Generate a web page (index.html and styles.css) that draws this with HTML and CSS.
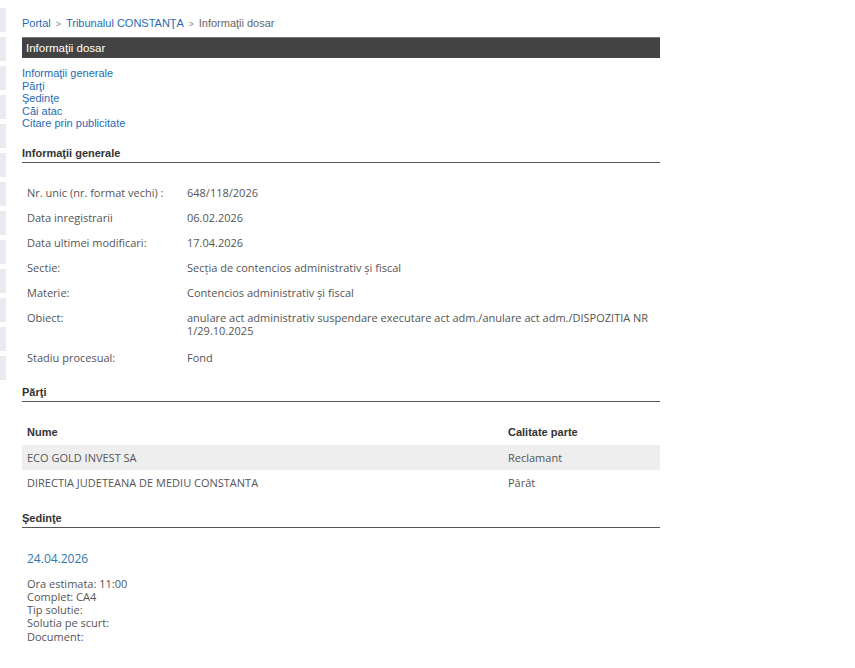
FILE: index.html
```html
<!DOCTYPE html>
<html lang="ro">
<head>
    <meta charset="UTF-8">
    <meta name="viewport" content="width=device-width, initial-scale=1.0">
    <title>Informaţii dosar</title>
    <link rel="stylesheet" href="styles.css">
</head>
<body>

    <div class="side-strip">
        <div></div><div></div><div></div><div></div><div></div><div></div>
        <div></div><div></div><div></div><div></div><div></div><div></div>
        <div></div>
    </div>

    <div class="page">
        <div class="breadcrumb">
            <a href="#">Portal</a>
            <span class="sep">&gt;</span>
            <a href="#">Tribunalul CONSTANŢA</a>
            <span class="sep">&gt;</span>
            <span class="current">Informaţii dosar</span>
        </div>

        <div class="title-bar">Informaţii dosar</div>

        <div class="anchors">
            <a href="#generale">Informaţii generale</a>
            <a href="#parti">Părţi</a>
            <a href="#sedinte">Şedinţe</a>
            <a href="#cai">Căi atac</a>
            <a href="#citare">Citare prin publicitate</a>
        </div>

        <h3 class="section-title" id="generale">Informaţii generale</h3>
        <table class="info-table">
            <tr><td class="label">Nr. unic (nr. format vechi) :</td><td>648/118/2026</td></tr>
            <tr><td class="label">Data inregistrarii</td><td>06.02.2026</td></tr>
            <tr><td class="label">Data ultimei modificari:</td><td>17.04.2026</td></tr>
            <tr><td class="label">Sectie:</td><td>Secţia de contencios administrativ şi fiscal</td></tr>
            <tr><td class="label">Materie:</td><td>Contencios administrativ şi fiscal</td></tr>
            <tr class="tall"><td class="label">Obiect:</td><td>anulare act administrativ suspendare executare act adm./anulare act adm./DISPOZITIA NR 1/29.10.2025</td></tr>
            <tr><td class="label">Stadiu procesual:</td><td>Fond</td></tr>
        </table>

        <h3 class="section-title" id="parti">Părţi</h3>
        <table class="parti-table">
            <tr class="head"><td>Nume</td><td class="calitate">Calitate parte</td></tr>
            <tr class="odd"><td>ECO GOLD INVEST SA</td><td class="calitate">Reclamant</td></tr>
            <tr><td>DIRECTIA JUDETEANA DE MEDIU CONSTANTA</td><td class="calitate">Pârât</td></tr>
        </table>

        <h3 class="section-title" id="sedinte">Şedinţe</h3>
        <div class="sedinta">
            <div class="sedinta-date">24.04.2026</div>
            <div class="sedinta-info">
                Ora estimata: 11:00<br>
                Complet: CA4<br>
                Tip solutie: <br>
                Solutia pe scurt: <br>
                Document:
            </div>
        </div>
    </div>

</body>
</html>
```

FILE: styles.css
```css
body {
    margin: 0;
    background: #fff;
    font-family: 'Liberation Sans', Arial, sans-serif;
    font-size: 11px;
    color: #555;
}

a {
    color: #1f6bb5;
    text-decoration: none;
}

.side-strip {
    position: absolute;
    left: 0;
    top: 8px;
    width: 6px;
    display: flex;
    flex-direction: column;
    gap: 5px;
}

.side-strip div {
    height: 24px;
    background: #e8ecf1;
}

.page {
    width: 638px;
    margin-left: 22px;
    padding-top: 15px;
}

.breadcrumb {
    height: 16px;
    line-height: 16px;
}

.breadcrumb .sep {
    color: #888;
    font-size: 9px;
    margin: 0 2px;
}

.breadcrumb .current {
    color: #666;
}

.title-bar {
    margin-top: 6px;
    background: #434343;
    border-top: 1px solid #777;
    color: #fff;
    font-size: 11.5px;
    height: 20px;
    line-height: 20px;
    padding-left: 4px;
}

.anchors {
    margin-top: 9px;
    padding-bottom: 3px;
    display: flex;
    flex-direction: column;
    line-height: 12.5px;
}

.section-title {
    margin: 13px 0 0 0;
    font-size: 11px;
    font-weight: bold;
    color: #333;
    border-bottom: 1px solid #555;
    padding-bottom: 2px;
    line-height: 14px;
}

.info-table, .parti-table {
    width: 100%;
    border-collapse: collapse;
    font-family: 'Open Sans', Tahoma, sans-serif;
    font-size: 11px;
    color: #555;
}

.info-table {
    margin-top: 19px;
}

.info-table td {
    vertical-align: top;
    padding: 4px 5px;
    line-height: 13px;
    height: 17px;
}

.info-table tr.tall td {
    padding-bottom: 10px;
}

.info-table td.label {
    width: 150px;
}

.parti-table {
    margin-top: 18px;
    margin-bottom: 16px;
    table-layout: fixed;
}

.parti-table td {
    padding: 0 5px;
    height: 25px;
}

.parti-table tr.head td {
    font-family: 'Liberation Sans', Arial, sans-serif;
    font-size: 11px;
    font-weight: bold;
    color: #333;
}

.parti-table tr.odd {
    background: #eee;
}

.parti-table td.calitate {
    width: 147px;
    padding-left: 2px;
}

.sedinta {
    padding-left: 5px;
    margin-top: 22px;
    font-family: 'Open Sans', Tahoma, sans-serif;
    font-size: 11px;
}

.sedinta-date {
    color: #2b78b5;
    font-size: 12px;
}

.sedinta-info {
    margin-top: 10px;
    line-height: 13.3px;
    color: #555;
}
```
